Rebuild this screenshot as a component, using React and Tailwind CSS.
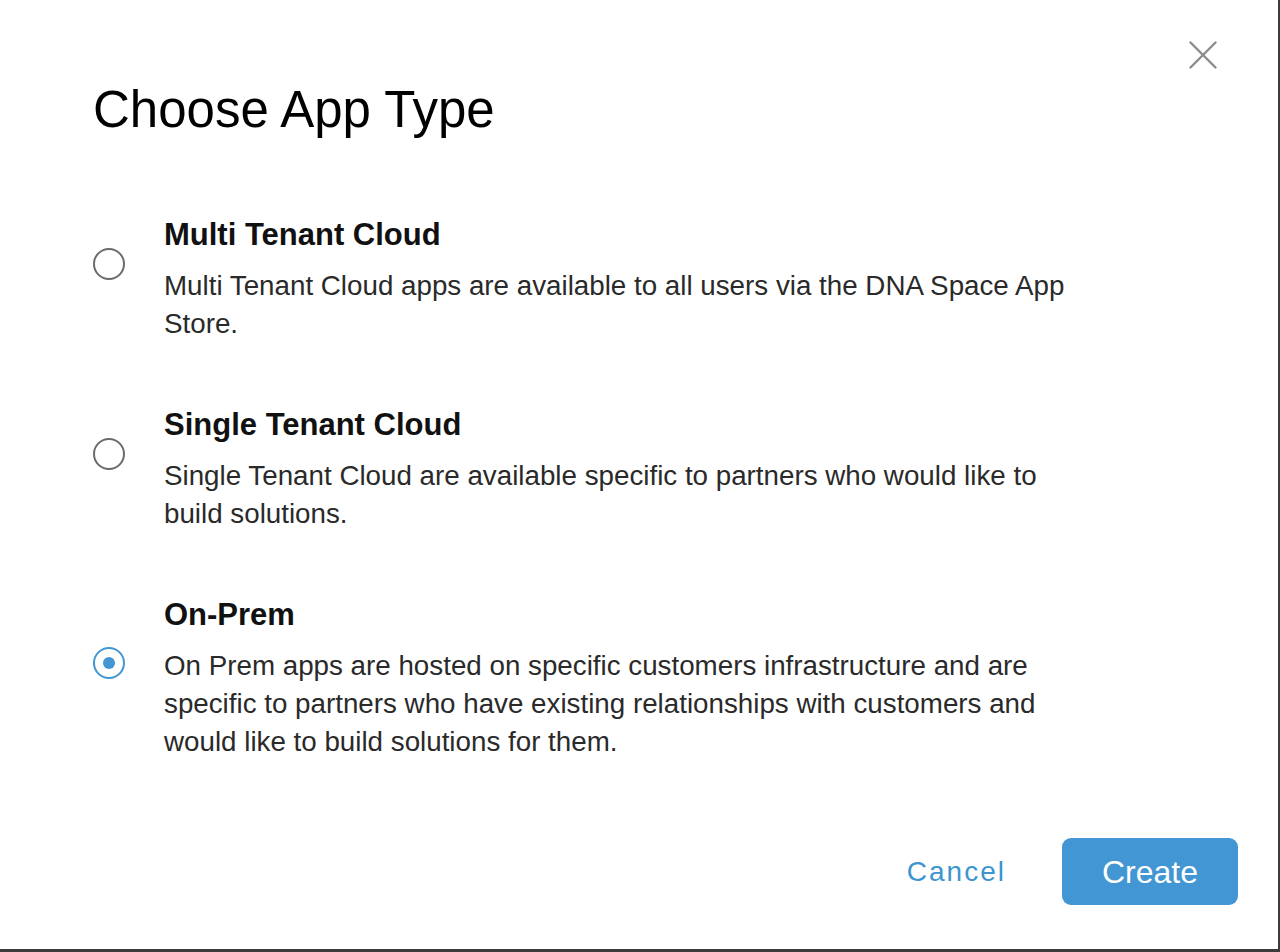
import React, { useState } from "react";

const appTypes = [
  {
    id: "multi",
    title: "Multi Tenant Cloud",
    description:
      "Multi Tenant Cloud apps are available to all users via the DNA Space App Store.",
  },
  {
    id: "single",
    title: "Single Tenant Cloud",
    description:
      "Single Tenant Cloud are available specific to partners who would like to build solutions.",
  },
  {
    id: "onprem",
    title: "On-Prem",
    description:
      "On Prem apps are hosted on specific customers infrastructure and are specific to partners who have existing relationships with customers and would like to build solutions for them.",
  },
];

function Radio({ checked }) {
  return (
    <span
      className={`flex h-[32px] w-[32px] shrink-0 items-center justify-center rounded-full border-2 ${
        checked ? "border-[#4196d3]" : "border-[#6b6b6b]"
      }`}
    >
      {checked && <span className="h-[12px] w-[12px] rounded-full bg-[#4196d3]" />}
    </span>
  );
}

export default function App() {
  const [selected, setSelected] = useState("onprem");

  return (
    <div className="relative h-[952px] w-[1280px] overflow-hidden border-b-[3px] border-r-2 border-[#3c3c3c] bg-white font-['Liberation_Sans',Arial,sans-serif] text-black">
      {/* close button */}
      <button className="absolute left-[1189px] top-[41px] h-[28px] w-[28px]" aria-label="Close">
        <svg viewBox="0 0 28 28" className="h-full w-full" fill="none" stroke="#8c8c8c" strokeWidth="2.4" strokeLinecap="round">
          <path d="M1.5 1.5 L26.5 26.5" />
          <path d="M26.5 1.5 L1.5 26.5" />
        </svg>
      </button>

      <div className="pl-[93px] pt-[85px]">
        <h1 className="text-[51px] leading-[50px] font-normal">Choose App Type</h1>

        <div className="mt-[49px] flex flex-col gap-[31px]">
          {appTypes.map((type) => (
            <div
              key={type.id}
              onClick={() => setSelected(type.id)}
              className="flex cursor-pointer items-center gap-[39px]"
            >
              <Radio checked={selected === type.id} />
              <div className="w-[920px] pt-[31px]">
                <p className="text-[31px] leading-[40px] font-bold text-[#111]">{type.title}</p>
                <p className="mt-[12px] text-[27.75px] leading-[38px] text-[#2a2a2a]">
                  {type.description}
                </p>
              </div>
            </div>
          ))}
        </div>
      </div>

      {/* footer */}
      <div className="mt-[77px] flex items-center justify-end gap-[56px] pr-[40px]">
        <button className="text-[28px] tracking-[2px] text-[#3d95d0]">Cancel</button>
        <button className="h-[67px] w-[176px] rounded-[9px] bg-[#4196d3] text-[32px] text-white">
          Create
        </button>
      </div>
    </div>
  );
}
